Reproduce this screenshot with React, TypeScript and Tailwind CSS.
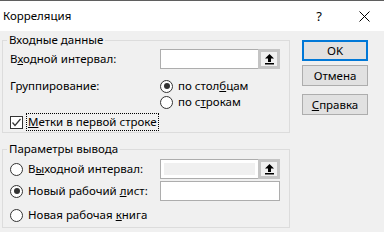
const UpArrow = () => (
  <svg width="11" height="12" viewBox="0 0 11 12" className="block">
    <path d="M5.5 1 L10 5.5 L7 5.5 L7 9 L4 9 L4 5.5 L1 5.5 Z" fill="#000" />
    <rect x="1" y="10" width="9" height="1.5" fill="#000" />
  </svg>
);

const Radio = ({ checked }: { checked?: boolean }) => (
  <span className="w-[13px] h-[13px] rounded-full border border-[#333] bg-white flex items-center justify-center shrink-0">
    {checked && <span className="w-[6px] h-[6px] rounded-full bg-[#333]" />}
  </span>
);

const RefInput = ({ disabled }: { disabled?: boolean }) => (
  <div className="flex w-[120px] h-[20px] border border-[#adadad] bg-white">
    <div className="flex-1 p-[3px]">
      {disabled && <div className="w-full h-full bg-[#f0f0f0]" />}
    </div>
    <div className="w-[22px] -my-px -mr-px border-[3px] border-[#c4c4c4] bg-[#f0f0f0] flex items-center justify-center">
      <UpArrow />
    </div>
  </div>
);

const Btn = ({ children, primary }: { children: React.ReactNode; primary?: boolean }) => (
  <button
    className={
      primary
        ? "w-[66px] h-[21px] border-2 border-[#0078d7] bg-[#e1e1e1] text-[11.5px] leading-none flex items-center justify-center"
        : "w-[66px] h-[21px] border border-[#adadad] bg-[#e1e1e1] text-[11.5px] leading-none flex items-center justify-center"
    }
  >
    {children}
  </button>
);

export default function App() {
  return (
    <div className="w-[384px] h-[232px] bg-[#f0f0f0] text-black text-[11.5px] leading-[16px] overflow-hidden [font-family:'Noto_Sans','Liberation_Sans',sans-serif]">
      {/* Title bar */}
      <div className="h-[31px] bg-white border-t border-[#5f5f5f] flex items-center pl-[3px]">
        <span className="flex-1 text-[11.5px]">Корреляция</span>
        <span className="w-[10px] text-center mr-[35px] text-[13px]">?</span>
        <svg width="11" height="11" viewBox="0 0 11 11" className="mr-[14px]">
          <path d="M0.5 0.5 L10.5 10.5 M10.5 0.5 L0.5 10.5" stroke="#000" strokeWidth="1" />
        </svg>
      </div>

      <div className="flex pl-[2px]">
        {/* Left column */}
        <div className="w-[288px] flex flex-col">
          <fieldset className="mt-px border border-[#dcdcdc] pl-[7px] pr-[8px] pb-px">
            <legend className="px-[2px] -ml-[3px] leading-[16px]">Входные данные</legend>
            <div className="flex items-center h-[20px] mt-px">
              <span className="w-[150px]">
                В<span className="underline">х</span>одной интервал:
              </span>
              <RefInput />
            </div>
            <div className="flex mt-[9px]">
              <span className="w-[150px] h-[16px] flex items-center">Группирование:</span>
              <div className="flex flex-col">
                <label className="flex items-center gap-[5px] h-[16px]">
                  <Radio checked />
                  <span>
                    по стол<span className="underline">б</span>цам
                  </span>
                </label>
                <label className="flex items-center gap-[5px] h-[16px]">
                  <Radio />
                  <span>
                    по с<span className="underline">т</span>рокам
                  </span>
                </label>
              </div>
            </div>
            <div className="flex items-center h-[18px] mt-[3px]">
              <span className="w-[13px] h-[13px] border border-[#333] bg-white flex items-center justify-center">
                <svg width="11" height="11" viewBox="0 0 11 11">
                  <path d="M1.5 5.5 L4 8.5 L9.5 2" stroke="#333" strokeWidth="1.2" fill="none" />
                </svg>
              </span>
              <span className="ml-[3px] h-[18px] px-px flex items-center border border-dotted border-black">
                <span className="underline">М</span>етки в первой строке
              </span>
            </div>
          </fieldset>

          <fieldset className="mt-[8px] border border-[#dcdcdc] pl-[7px] pr-[8px] pb-[4px]">
            <legend className="px-[2px] -ml-[3px] leading-[16px]">Параметры вывода</legend>
            <div className="flex items-center h-[20px] mt-[2px]">
              <label className="w-[150px] flex items-center gap-[5px]">
                <Radio />
                <span>
                  В<span className="underline">ы</span>ходной интервал:
                </span>
              </label>
              <RefInput disabled />
            </div>
            <div className="flex items-center h-[20px] mt-[2px]">
              <label className="w-[150px] flex items-center gap-[5px]">
                <Radio checked />
                <span>
                  Новый рабочий <span className="underline">л</span>ист:
                </span>
              </label>
              <div className="w-[120px] h-[20px] border border-[#adadad] bg-white" />
            </div>
            <label className="flex items-center gap-[5px] h-[16px] mt-[6px]">
              <Radio />
              <span>
                Новая рабочая <span className="underline">к</span>нига
              </span>
            </label>
          </fieldset>
        </div>

        {/* Right column */}
        <div className="ml-[12px] mt-[9px] flex flex-col">
          <Btn primary>OK</Btn>
          <div className="mt-[4px]">
            <Btn>Отмена</Btn>
          </div>
          <div className="mt-[8px]">
            <Btn>
              <span className="underline">С</span>правка
            </Btn>
          </div>
        </div>
      </div>
    </div>
  );
}
